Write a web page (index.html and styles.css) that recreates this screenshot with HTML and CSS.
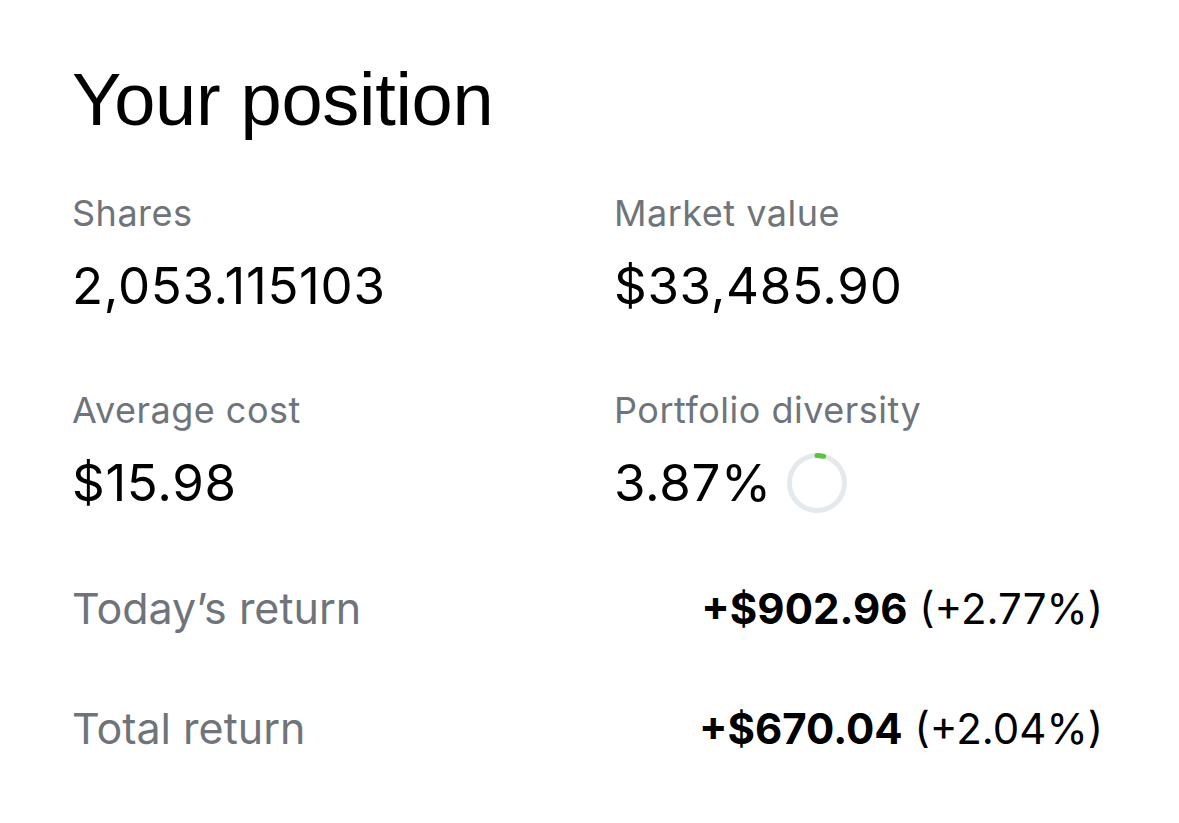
FILE: index.html
```html
<!DOCTYPE html>
<html lang="en">
<head>
<meta charset="utf-8">
<title>Your position</title>
<link rel="stylesheet" href="styles.css">
</head>
<body>
<main class="position">
  <h1 class="title">Your position</h1>
  <div class="stats">
    <div class="stat">
      <div class="label">Shares</div>
      <div class="value">2,053.115103</div>
    </div>
    <div class="stat">
      <div class="label">Market value</div>
      <div class="value">$33,485.90</div>
    </div>
    <div class="stat">
      <div class="label">Average cost</div>
      <div class="value">$15.98</div>
    </div>
    <div class="stat">
      <div class="label">Portfolio diversity</div>
      <div class="value value-ring">
        <span>3.87%</span>
        <svg class="ring" width="60" height="60" viewBox="0 0 60 60" aria-hidden="true">
          <circle cx="30" cy="30" r="27.5" fill="none" stroke="#e4e9ed" stroke-width="5"/>
          <circle cx="30" cy="30" r="27.5" fill="none" stroke="#5ac53b" stroke-width="5" stroke-linecap="round" stroke-dasharray="6.7 180" transform="rotate(-90 30 30)"/>
        </svg>
      </div>
    </div>
  </div>
  <div class="returns">
    <div class="return-row">
      <span class="return-label">Today’s return</span>
      <span class="return-value"><b>+$902.96</b> (+2.77%)</span>
    </div>
    <div class="return-row">
      <span class="return-label">Total return</span>
      <span class="return-value"><b>+$670.04</b> (+2.04%)</span>
    </div>
  </div>
</main>
</body>
</html>
```
FILE: styles.css
```css
html, body {
  margin: 0;
  padding: 0;
  background: #ffffff;
}

body {
  font-family: "Inter", "Liberation Sans", Arial, sans-serif;
  color: #000000;
}

.position {
  width: 1031px;
  padding: 60px 0 0 72px;
}

.title {
  margin: 0;
  font-family: "Liberation Sans", Arial, sans-serif;
  font-size: 74px;
  line-height: 80px;
  font-weight: 400;
  letter-spacing: -0.3px;
}

.stats {
  margin-top: 53px;
  display: grid;
  grid-template-columns: 542px 1fr;
  row-gap: 79px;
}

.stat {
  display: flex;
  flex-direction: column;
  gap: 28px;
}

.label {
  font-size: 36px;
  line-height: 40px;
  letter-spacing: 0.5px;
  color: #6f747b;
}

.value {
  font-size: 51px;
  line-height: 50px;
  letter-spacing: 0.7px;
}

.value-ring {
  display: flex;
  align-items: center;
  gap: 15px;
}

.ring {
  display: block;
  flex: none;
  margin: -5px 0;
}

.returns {
  margin-top: 75px;
  display: flex;
  flex-direction: column;
  gap: 69px;
}

.return-row {
  display: flex;
  justify-content: space-between;
  align-items: baseline;
  line-height: 50px;
}

.return-label {
  font-size: 43px;
  color: #6f747b;
}

.return-value {
  font-size: 42px;
}

.return-value b {
  font-weight: 700;
}
```
